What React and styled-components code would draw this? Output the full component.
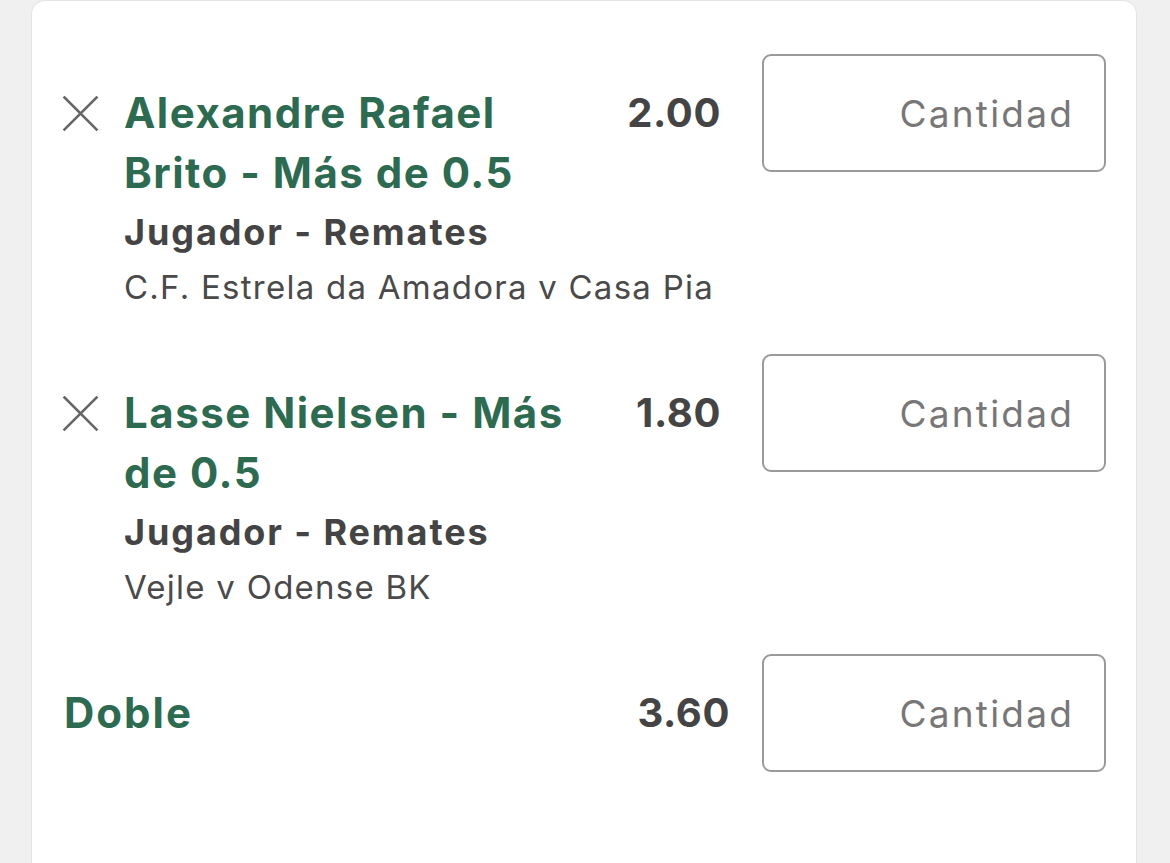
import React from "react";
import styled, { createGlobalStyle } from "styled-components";

const Global = createGlobalStyle`
  html, body { margin: 0; padding: 0; background: #f0f0f0; }
  body { font-family: Inter, "Liberation Sans", Arial, sans-serif; -webkit-font-smoothing: antialiased; }
  * { box-sizing: border-box; }
`;

const Page = styled.div`
  height: 863px;
  overflow: hidden;
  padding: 0 33px 0 31px;
`;

const Card = styled.div`
  background: #fff;
  border: 1px solid #e4e4e4;
  border-bottom: none;
  border-radius: 14px 14px 0 0;
  min-height: 900px;
  padding: 53px 30px 0 30px;
  display: flex;
  flex-direction: column;
  gap: 40px;
`;

const Row = styled.div`
  display: flex;
  align-items: ${(p) => (p.$center ? "center" : "flex-start")};
`;

const Left = styled.div`
  flex: 1;
  display: flex;
  padding-top: ${(p) => (p.$center ? "0" : "29px")};
  padding-right: ${(p) => p.$pr || "41px"};
  align-items: ${(p) => (p.$center ? "center" : "flex-start")};
`;

const IconWrap = styled.button`
  flex: none;
  width: 62px;
  padding: 0;
  margin: 12px 0 0 0;
  border: none;
  background: none;
  display: flex;
  cursor: pointer;
`;

const Body = styled.div`
  flex: 1;
  min-width: 0;
`;

const TitleRow = styled.div`
  display: flex;
  align-items: flex-start;
  gap: 28px;
`;

const Title = styled.div`
  flex: 1;
  color: #2d6b51;
  font-weight: 700;
  font-size: 42px;
  line-height: 60px;
  letter-spacing: 1.5px;
`;

const Odds = styled.div`
  flex: none;
  color: #444;
  font-weight: 700;
  font-size: 40px;
  line-height: 60px;
  letter-spacing: 0.6px;
`;

const Market = styled.div`
  color: #444;
  font-weight: 700;
  font-size: 36px;
  line-height: 58px;
  letter-spacing: 1.9px;
`;

const Match = styled.div`
  color: #4a4a4a;
  font-weight: 400;
  font-size: 33px;
  line-height: 53px;
  letter-spacing: 1.25px;
`;

const Label = styled.div`
  flex: 1;
  color: #2d6b51;
  font-weight: 700;
  font-size: 42px;
  line-height: 60px;
  letter-spacing: 2px;
  padding-left: 2px;
`;

const Stake = styled.input`
  flex: none;
  width: 344px;
  height: 118px;
  border: 2.5px solid #9a9a9a;
  border-radius: 9px;
  background: #fff;
  text-align: right;
  padding: 0 30px 0 16px;
  font-family: Inter, "Liberation Sans", Arial, sans-serif;
  font-size: 37px;
  letter-spacing: 2.2px;
  color: #333;
  outline: none;
  &::placeholder { color: #777; opacity: 1; }
`;

const CloseIcon = () => (
  <svg width="37" height="37" viewBox="0 0 37 37" aria-hidden="true">
    <g stroke="#666" strokeWidth="2.6" strokeLinecap="square">
      <line x1="2.5" y1="2.5" x2="34.5" y2="34.5" />
      <line x1="34.5" y1="2.5" x2="2.5" y2="34.5" />
    </g>
  </svg>
);

const bets = [
  {
    title: "Alexandre Rafael Brito - Más de 0.5",
    odds: "2.00",
    market: "Jugador - Remates",
    match: "C.F. Estrela da Amadora v Casa Pia",
  },
  {
    title: "Lasse Nielsen - Más de 0.5",
    odds: "1.80",
    market: "Jugador - Remates",
    match: "Vejle v Odense BK",
  },
];

export default function App() {
  return (
    <>
      <Global />
      <Page>
        <Card>
          {bets.map((b) => (
            <Row key={b.title}>
              <Left>
                <IconWrap aria-label="Eliminar">
                  <CloseIcon />
                </IconWrap>
                <Body>
                  <TitleRow>
                    <Title>{b.title}</Title>
                    <Odds>{b.odds}</Odds>
                  </TitleRow>
                  <Market>{b.market}</Market>
                  <Match>{b.match}</Match>
                </Body>
              </Left>
              <Stake placeholder="Cantidad" />
            </Row>
          ))}
          <Row $center>
            <Left $center $pr="32px">
              <Label>Doble</Label>
              <Odds>3.60</Odds>
            </Left>
            <Stake placeholder="Cantidad" />
          </Row>
        </Card>
      </Page>
    </>
  );
}
